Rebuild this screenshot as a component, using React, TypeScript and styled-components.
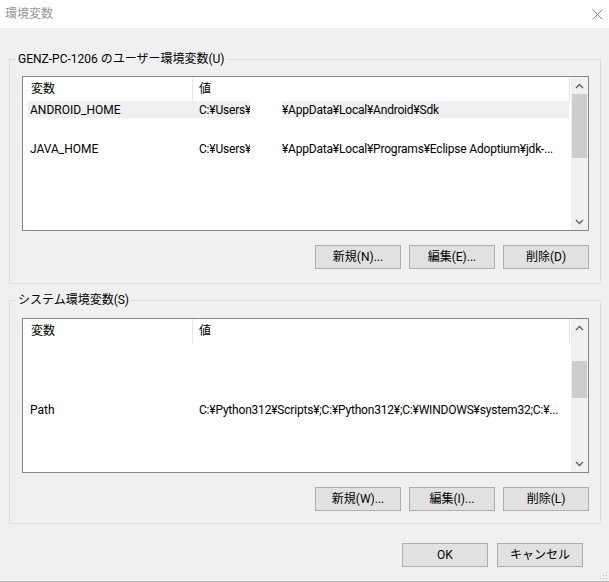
import React from "react";
import styled, { createGlobalStyle } from "styled-components";

const Global = createGlobalStyle`
  html, body { margin: 0; padding: 0; background: #f0f0f0; overflow: hidden; }
  * { box-sizing: border-box; }
`;

const FONT = `Roboto, "Noto Sans CJK JP", sans-serif`;

const Window = styled.div`
  position: relative;
  width: 609px;
  height: 582px;
  background: #f0f0f0;
  border-bottom: 1px solid #b9b9b9;
  display: flex;
  flex-direction: column;
  font-family: ${FONT};
  font-size: 12px;
  color: #000;
`;

const TitleBar = styled.div`
  height: 28px;
  flex: none;
  background: #fff;
  display: flex;
  align-items: center;
  justify-content: space-between;
  padding: 0 6px 0 5px;
`;

const TitleText = styled.span`
  color: #999;
  font-size: 12px;
  line-height: 16px;
`;

const Content = styled.div`
  flex: 1;
  display: flex;
  flex-direction: column;
  padding: 23px 8px 0 9px;
`;

const Group = styled.fieldset<{ $pt: number; $pb: number; $mt: number }>`
  margin: ${(p) => p.$mt}px 0 0 0;
  min-width: 0;
  border: 1px solid #dcdcdc;
  padding: ${(p) => p.$pt}px 11px ${(p) => p.$pb}px 12px;
  display: flex;
  flex-direction: column;
`;

const Legend = styled.legend`
  margin-left: -6px;
  padding: 0 2px;
  line-height: 16px;
  font-size: 12px;
  color: #000;
`;

const ListBox = styled.div`
  height: 155px;
  border: 1px solid #828790;
  background: #fff;
  display: flex;
`;

const ListContent = styled.div`
  flex: 1;
  min-width: 0;
  display: flex;
  flex-direction: column;
  overflow: hidden;
`;

const HeaderRow = styled.div`
  height: 24px;
  flex: none;
  display: flex;
`;

const HeaderCell = styled.div<{ $w: number; $pl: number }>`
  width: ${(p) => p.$w}px;
  flex: none;
  padding-left: ${(p) => p.$pl}px;
  border-right: 1px solid #e5e5e5;
  display: flex;
  align-items: center;
  line-height: 16px;
`;

const Row = styled.div<{ $selected?: boolean; $gap: number }>`
  height: 17px;
  flex: none;
  margin: ${(p) => p.$gap}px 2px 0 5px;
  background: ${(p) => (p.$selected ? "#f0f0f0" : "#fff")};
  display: flex;
  line-height: 19px;
  white-space: nowrap;
`;

const NameCell = styled.div`
  width: 164px;
  flex: none;
  padding-left: 2px;
  overflow: hidden;
`;

const ValueCell = styled.div`
  flex: 1;
  min-width: 0;
  padding-left: 7px;
  overflow: hidden;
  display: flex;
  letter-spacing: -0.2px;
`;

const Prefix = styled.span`
  width: 51px;
  flex: none;
  overflow: hidden;
`;

const Redact = styled.span`
  width: 32px;
  flex: none;
  background: #fff;
`;

const Rest = styled.span`
  overflow: hidden;
`;

const ScrollBar = styled.div`
  width: 17px;
  flex: none;
  background: #f0f0f0;
  display: flex;
  flex-direction: column;
`;

const ArrowButton = styled.div`
  height: 17px;
  flex: none;
  display: flex;
  align-items: center;
  justify-content: center;
`;

const Track = styled.div`
  flex: 1;
  display: flex;
  flex-direction: column;
`;

const Thumb = styled.div<{ $top: number; $h: number }>`
  margin: ${(p) => p.$top}px 1px 0 1px;
  height: ${(p) => p.$h}px;
  background: #cdcdcd;
`;

const ButtonRow = styled.div<{ $gap: number; $mt: number; $mr: number }>`
  display: flex;
  justify-content: flex-end;
  gap: ${(p) => p.$gap}px;
  margin-top: ${(p) => p.$mt}px;
  margin-right: ${(p) => p.$mr}px;
`;

const Button = styled.button`
  width: 86px;
  height: 24px;
  padding: 0;
  margin: 0;
  background: #e1e1e1;
  border: 1px solid #adadad;
  font-family: ${FONT};
  font-size: 12px;
  color: #000;
  line-height: 16px;
`;

const Grip = styled.svg`
  position: absolute;
  right: 1px;
  bottom: 1px;
`;

const Chevron = ({ up }: { up?: boolean }) => (
  <svg width="9" height="6" viewBox="0 0 9 6">
    <polyline
      points={up ? "1,5 4.5,1.5 8,5" : "1,1 4.5,4.5 8,1"}
      fill="none"
      stroke="#606060"
      strokeWidth="1.4"
    />
  </svg>
);

type RowData = {
  name: string;
  prefix?: string;
  value: string;
  gap: number;
  selected?: boolean;
};

const VarList = ({
  rows,
  thumbTop,
  thumbH,
}: {
  rows: RowData[];
  thumbTop: number;
  thumbH: number;
}) => (
  <ListBox>
    <ListContent>
      <HeaderRow>
        <HeaderCell $w={170} $pl={8}>変数</HeaderCell>
        <HeaderCell $w={377} $pl={6}>値</HeaderCell>
      </HeaderRow>
      {rows.map((r) => (
        <Row key={r.name} $gap={r.gap} $selected={r.selected}>
          <NameCell>{r.name}</NameCell>
          <ValueCell>
            {r.prefix && (
              <>
                <Prefix>{r.prefix}</Prefix>
                <Redact />
              </>
            )}
            <Rest>{r.value}</Rest>
          </ValueCell>
        </Row>
      ))}
    </ListContent>
    <ScrollBar>
      <ArrowButton>
        <Chevron up />
      </ArrowButton>
      <Track>
        <Thumb $top={thumbTop} $h={thumbH} />
      </Track>
      <ArrowButton>
        <Chevron />
      </ArrowButton>
    </ScrollBar>
  </ListBox>
);

const userRows: RowData[] = [
  {
    name: "ANDROID_HOME",
    prefix: "C:¥Users¥",
    value: "¥AppData¥Local¥Android¥Sdk",
    gap: 0,
    selected: true,
  },
  {
    name: "JAVA_HOME",
    prefix: "C:¥Users¥",
    value: "¥AppData¥Local¥Programs¥Eclipse Adoptium¥jdk-...",
    gap: 22,
  },
];

const systemRows: RowData[] = [
  {
    name: "Path",
    value: "C:¥Python312¥Scripts¥;C:¥Python312¥;C:¥WINDOWS¥system32;C:¥...",
    gap: 58,
  },
];

export default function App() {
  return (
    <>
      <Global />
      <Window>
        <TitleBar>
          <TitleText>環境変数</TitleText>
          <svg width="11" height="11" viewBox="0 0 11 11">
            <path d="M0.5 0.5 L10.5 10.5 M10.5 0.5 L0.5 10.5" stroke="#8a8a8a" strokeWidth="1" />
          </svg>
        </TitleBar>
        <Content>
          <Group $pt={9} $pb={14} $mt={0}>
            <Legend>GENZ-PC-1206 のユーザー環境変数(U)</Legend>
            <VarList rows={userRows} thumbTop={0} thumbH={64} />
            <ButtonRow $gap={8} $mt={14} $mr={0}>
              <Button>新規(N)...</Button>
              <Button>編集(E)...</Button>
              <Button>削除(D)</Button>
            </ButtonRow>
          </Group>
          <Group $pt={10} $pb={12} $mt={8}>
            <Legend>システム環境変数(S)</Legend>
            <VarList rows={systemRows} thumbTop={25} thumbH={37} />
            <ButtonRow $gap={8} $mt={14} $mr={0}>
              <Button>新規(W)...</Button>
              <Button>編集(I)...</Button>
              <Button>削除(L)</Button>
            </ButtonRow>
          </Group>
          <ButtonRow $gap={9} $mt={19} $mr={18}>
            <Button>OK</Button>
            <Button>キャンセル</Button>
          </ButtonRow>
        </Content>
        <Grip width="8" height="8" viewBox="0 0 8 8">
          <rect x="6" y="0" width="1" height="1" fill="#b8b8b8" />
          <rect x="3" y="3" width="1" height="1" fill="#b8b8b8" />
          <rect x="6" y="3" width="1" height="1" fill="#b8b8b8" />
          <rect x="0" y="6" width="1" height="1" fill="#b8b8b8" />
          <rect x="3" y="6" width="1" height="1" fill="#b8b8b8" />
          <rect x="6" y="6" width="1" height="1" fill="#b8b8b8" />
        </Grip>
      </Window>
    </>
  );
}
